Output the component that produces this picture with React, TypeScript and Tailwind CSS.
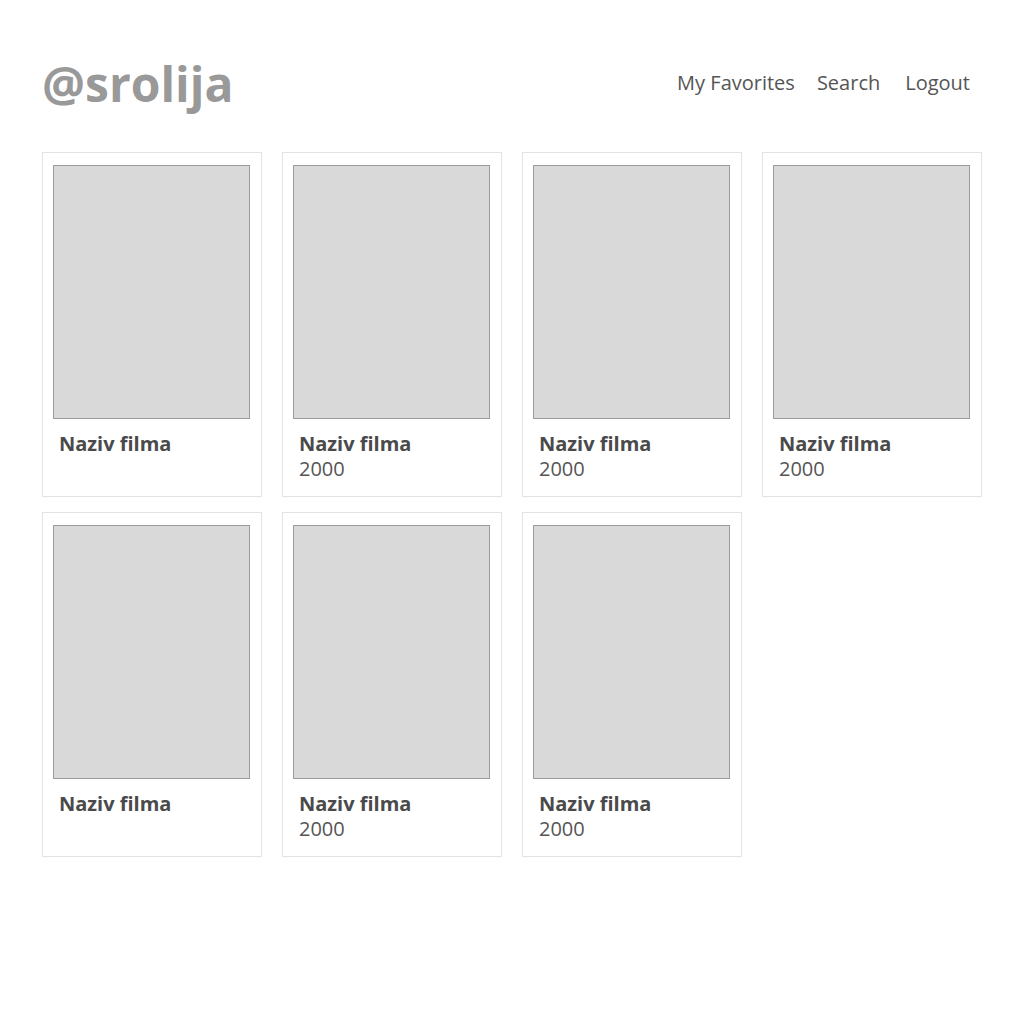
const movies = [
  { title: "Naziv filma", year: "" },
  { title: "Naziv filma", year: "2000" },
  { title: "Naziv filma", year: "2000" },
  { title: "Naziv filma", year: "2000" },
  { title: "Naziv filma", year: "" },
  { title: "Naziv filma", year: "2000" },
  { title: "Naziv filma", year: "2000" },
];

function MovieCard({ title, year }: { title: string; year: string }) {
  return (
    <div className="border border-[#e3e3e3] bg-white pl-[10px] pr-[11px] pt-[12px] pb-[15px]">
      <div className="h-[254px] border border-[#9a9a9a] bg-[#d9d9d9]" />
      <div className="mt-[12px] px-[6px] text-[20px] leading-[25px]">
        <div className="font-bold text-[#4a4a4a]">{title}</div>
        {year && <div className="text-[#555555]">{year}</div>}
      </div>
    </div>
  );
}

export default function App() {
  return (
    <div
      className="min-h-screen bg-white"
      style={{ fontFamily: '"Open Sans", "Noto Sans", sans-serif' }}
    >
      <div className="mx-auto w-[940px] pt-[60px]">
        <header className="mb-[44px] flex items-center justify-between">
          <h1 className="text-[48px] font-bold leading-[48px] text-[#999999]">
            @srolija
          </h1>
          <nav className="mr-3 mb-[2px] flex text-[20px] text-[#555555]">
            <a>My Favorites</a>
            <a className="ml-[22px]">Search</a>
            <a className="ml-[25px]">Logout</a>
          </nav>
        </header>

        <div className="grid grid-cols-4 gap-x-5 gap-y-[15px]">
          {movies.map((m, i) => (
            <MovieCard key={i} title={m.title} year={m.year} />
          ))}
        </div>
      </div>
    </div>
  );
}
